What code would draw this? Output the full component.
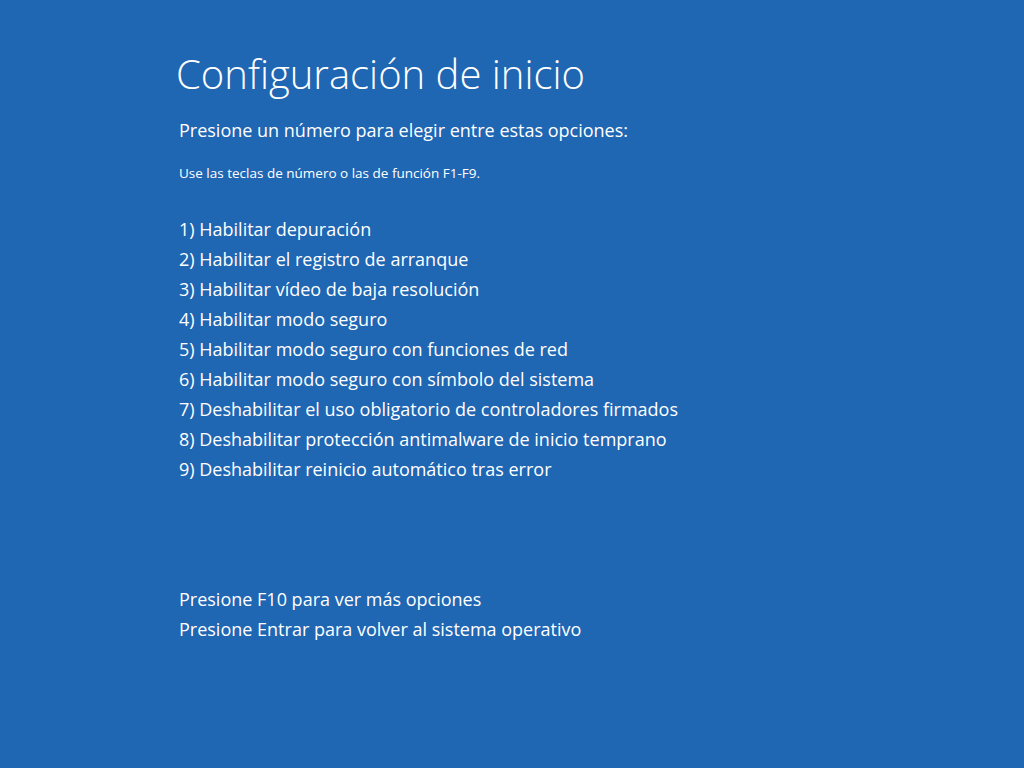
const options = [
  "1) Habilitar depuración",
  "2) Habilitar el registro de arranque",
  "3) Habilitar vídeo de baja resolución",
  "4) Habilitar modo seguro",
  "5) Habilitar modo seguro con funciones de red",
  "6) Habilitar modo seguro con símbolo del sistema",
  "7) Deshabilitar el uso obligatorio de controladores firmados",
  "8) Deshabilitar protección antimalware de inicio temprano",
  "9) Deshabilitar reinicio automático tras error",
]

export default function App() {
  return (
    <div
      className="h-[768px] w-[1024px] overflow-hidden bg-[#1f66b3] text-white"
      style={{ fontFamily: '"Open Sans", "Noto Sans", sans-serif' }}
    >
      <div className="pl-[179px] pt-[46px]">
        <h1 className="-ml-[3px] text-[40px] font-light leading-[56px]">Configuración de inicio</h1>
        <p className="mt-[16px] text-[18px] leading-[24px]">Presione un número para elegir entre estas opciones:</p>
        <p className="mt-[22px] text-[13.5px] leading-[18px]">Use las teclas de número o las de función F1-F9.</p>

        <ul className="mt-[32px]">
          {options.map((o) => (
            <li key={o} className="text-[18px] leading-[30px]">
              {o}
            </li>
          ))}
        </ul>

        <div className="mt-[100px]">
          <p className="text-[18px] leading-[30px]">Presione F10 para ver más opciones</p>
          <p className="text-[18px] leading-[30px]">Presione Entrar para volver al sistema operativo</p>
        </div>
      </div>
    </div>
  )
}
